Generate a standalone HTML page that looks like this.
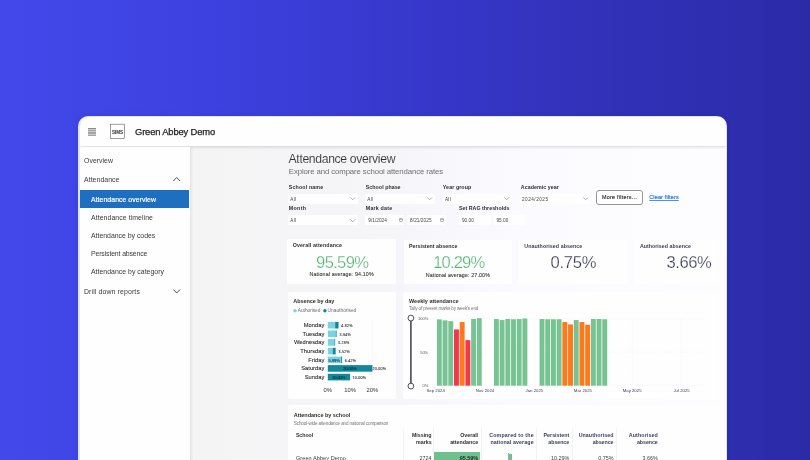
<!DOCTYPE html>
<html><head><meta charset="utf-8"><title>Attendance overview</title>
<style>
html,body{margin:0;padding:0;overflow:hidden;}
html{width:810px;height:460px;}
body{width:810px;height:460px;overflow:hidden;position:relative;font-family:"Liberation Sans", sans-serif;background:linear-gradient(90deg,#4248ea 0%,#3d41df 25%,#383ad0 45%,#3232bc 70%,#2b2ba8 100%);}
.t{position:absolute;white-space:pre;}
.a{position:absolute;}
</style></head><body>
<div class="a" style="left:0;top:0;width:810px;height:460px;overflow:hidden;will-change:transform;opacity:0.999;">
<div class="a" style="left:78px;top:115.5px;width:649px;height:360px;border-radius:10px 10px 0 0;background:#dfe6ff;box-shadow:0 0 6px rgba(20,20,110,0.07);"></div>
<div class="a" style="left:80px;top:117px;width:645.5px;height:350px;border-radius:8.5px 8.5px 0 0;background:#fff;overflow:hidden;">
<div class="a" style="left:109.5px;top:29px;width:536px;height:330px;background:linear-gradient(90deg,#f5f5f5 0%,#f6f6f7 28%,#f8f8fc 48%,#fbfbff 62%,#fdfdff 76%,#fefeff 100%);"></div>
<div class="a" style="left:0;top:0;width:646px;height:29px;background:#fff;box-shadow:0 1px 3px rgba(0,0,30,0.16);"></div>
<div class="a" style="left:0;top:29.5px;width:109.5px;height:330px;background:#fff;box-shadow:1px 0 2px rgba(0,0,0,0.05);border-right:0.8px solid #e6e6e6;"></div>
</div>
<div class="a" style="left:80.2px;top:190.2px;width:109.2px;height:17.7px;background:#1f70c1;"></div>
<div class="a" style="left:88.3px;top:128.0px;width:7.8px;height:8.0px;background:#c9c9c9;"></div>
<div class="a" style="left:88.3px;top:128.0px;width:7.8px;height:0.9px;background:#8c8c8c;"></div>
<div class="a" style="left:88.3px;top:129.75px;width:7.8px;height:0.9px;background:#a6a6a6;"></div>
<div class="a" style="left:88.3px;top:131.5px;width:7.8px;height:0.9px;background:#a6a6a6;"></div>
<div class="a" style="left:88.3px;top:133.25px;width:7.8px;height:0.9px;background:#a6a6a6;"></div>
<div class="a" style="left:88.3px;top:135.0px;width:7.8px;height:0.9px;background:#a6a6a6;"></div>
<svg class="a" style="left:109px;top:123px" width="18" height="18" viewBox="109 123 18 18"><rect x="110.5" y="124.2" width="14" height="14.3" fill="#fff" stroke="#6e6e6e" stroke-width="0.65"/><text x="111.9" y="133.75" font-family="Liberation Sans, sans-serif" font-weight="700" font-size="5.4" textLength="11.3" lengthAdjust="spacingAndGlyphs" fill="#2c2c2c">SIMS</text></svg>
<svg class="a" style="left:173.2px;top:177.4px" width="7.4" height="4.5" viewBox="0 0 7.4 4.5"><path d="M0.3 4 L3.7 0.5 L7.1 4" fill="none" stroke="#333" stroke-width="0.85"/></svg>
<svg class="a" style="left:173.2px;top:289.4px" width="7.4" height="4.5" viewBox="0 0 7.4 4.5"><path d="M0.3 0.5 L3.7 4 L7.1 0.5" fill="none" stroke="#333" stroke-width="0.85"/></svg>
<div class="a" style="left:288px;top:193.5px;width:69.8px;height:10.1px;background:#fff;"></div>
<svg class="a" style="left:350.3px;top:197.2px" width="5.4" height="3.2" viewBox="0 0 5.4 3.2"><path d="M0.2 0.3 L2.7 2.8 L5.2 0.3" fill="none" stroke="#777" stroke-width="0.55"/></svg>
<div class="a" style="left:365px;top:193.5px;width:69.8px;height:10.1px;background:#fff;"></div>
<svg class="a" style="left:427.3px;top:197.2px" width="5.4" height="3.2" viewBox="0 0 5.4 3.2"><path d="M0.2 0.3 L2.7 2.8 L5.2 0.3" fill="none" stroke="#777" stroke-width="0.55"/></svg>
<div class="a" style="left:442.7px;top:193.5px;width:69.2px;height:10.1px;background:#fff;"></div>
<svg class="a" style="left:504.4px;top:197.2px" width="5.4" height="3.2" viewBox="0 0 5.4 3.2"><path d="M0.2 0.3 L2.7 2.8 L5.2 0.3" fill="none" stroke="#777" stroke-width="0.55"/></svg>
<div class="a" style="left:519.8px;top:193.5px;width:70.2px;height:10.1px;background:#fff;"></div>
<svg class="a" style="left:582.5px;top:197.2px" width="5.4" height="3.2" viewBox="0 0 5.4 3.2"><path d="M0.2 0.3 L2.7 2.8 L5.2 0.3" fill="none" stroke="#777" stroke-width="0.55"/></svg>
<div class="a" style="left:288px;top:215px;width:69.8px;height:10.2px;background:#fff;"></div>
<svg class="a" style="left:350.3px;top:218.7px" width="5.4" height="3.2" viewBox="0 0 5.4 3.2"><path d="M0.2 0.3 L2.7 2.8 L5.2 0.3" fill="none" stroke="#777" stroke-width="0.55"/></svg>
<div class="a" style="left:365px;top:215px;width:39px;height:10.2px;background:#fff;"></div>
<div class="a" style="left:407.3px;top:215px;width:38.3px;height:10.2px;background:#fff;"></div>
<div class="a" style="left:458.8px;top:214.9px;width:32px;height:10.2px;background:#fff;"></div>
<div class="a" style="left:493.5px;top:214.9px;width:31.8px;height:10.2px;background:#fff;"></div>
<svg class="a" style="left:399.0px;top:218.1px" width="3.8" height="3.8" viewBox="0 0 3.8 3.8"><rect x="0.35" y="0.45" width="3.1" height="3.0" rx="0.7" fill="none" stroke="#6a6a6a" stroke-width="0.5"/><path d="M0.35 1.35H3.45" stroke="#6a6a6a" stroke-width="0.5"/></svg>
<svg class="a" style="left:440.3px;top:218.1px" width="3.8" height="3.8" viewBox="0 0 3.8 3.8"><rect x="0.35" y="0.45" width="3.1" height="3.0" rx="0.7" fill="none" stroke="#6a6a6a" stroke-width="0.5"/><path d="M0.35 1.35H3.45" stroke="#6a6a6a" stroke-width="0.5"/></svg>
<div class="a" style="left:596px;top:190.2px;width:45.2px;height:13.1px;border:0.6px solid #969696;border-radius:3px;background:#fff;"></div>
<div class="a" style="left:287.4px;top:239px;width:108.7px;height:45px;background:#fff;border-radius:2px;"></div>
<div class="a" style="left:403.9px;top:239.6px;width:108.2px;height:44.2px;background:#fff;border-radius:2px;"></div>
<div class="a" style="left:519.3px;top:240px;width:107.6px;height:44px;background:#fff;border-radius:2px;"></div>
<div class="a" style="left:634px;top:240px;width:85px;height:44px;background:#fff;border-radius:2px;"></div>
<div class="a" style="left:288.1px;top:291.7px;width:108.3px;height:107.6px;background:#fff;border-radius:2px;"></div>
<div class="a" style="left:403.4px;top:291.5px;width:316px;height:107.8px;background:#fff;border-radius:2px;"></div>
<div class="a" style="left:287.6px;top:404.6px;width:432px;height:70px;background:#fff;border-radius:2px;"></div>
<svg class="a" style="left:288px;top:291px" width="110" height="108" viewBox="288 291 110 108">
<circle cx="295" cy="310.7" r="1.75" fill="#79d5e0"/><circle cx="324.9" cy="310.7" r="1.75" fill="#128a9b"/>
<path d="M350.1 320V382" stroke="#ddd" stroke-width="0.4" stroke-dasharray="0.6 1"/>
<path d="M372.4 320V382" stroke="#ddd" stroke-width="0.4" stroke-dasharray="0.6 1"/>
<rect x="327.8" y="321.90" width="7.36" height="6.6" fill="#79d5e0"/>
<rect x="335.16" y="321.90" width="3.39" height="6.6" fill="#128a9b"/>
<rect x="327.8" y="330.50" width="7.92" height="6.6" fill="#79d5e0"/>
<rect x="335.72" y="330.50" width="0.87" height="6.6" fill="#128a9b"/>
<rect x="327.8" y="339.10" width="6.58" height="6.6" fill="#79d5e0"/>
<rect x="334.38" y="339.10" width="0.74" height="6.6" fill="#128a9b"/>
<rect x="327.8" y="347.80" width="4.91" height="6.6" fill="#79d5e0"/>
<rect x="332.71" y="347.80" width="2.94" height="6.6" fill="#128a9b"/>
<rect x="327.8" y="356.60" width="13.36" height="6.6" fill="#79d5e0"/>
<rect x="341.16" y="356.60" width="0.96" height="6.6" fill="#128a9b"/>
<rect x="327.80" y="365.10" width="44.60" height="6.6" fill="#128a9b"/>
<rect x="327.80" y="373.80" width="22.30" height="6.6" fill="#128a9b"/>
</svg>
<svg class="a" style="left:403px;top:291px" width="323" height="108" viewBox="403 291 323 108">
<path d="M430 318.8H706" stroke="#e9e9ef" stroke-width="0.4" stroke-dasharray="0.6 1.2"/>
<path d="M430 352H706" stroke="#e9e9ef" stroke-width="0.4" stroke-dasharray="0.6 1.2"/>
<path d="M430 385.2H706" stroke="#e9e9ef" stroke-width="0.4" stroke-dasharray="0.6 1.2"/>
<path d="M485 318V385.2" stroke="#e9e9ef" stroke-width="0.4" stroke-dasharray="0.6 1.2"/>
<path d="M534.4 318V385.2" stroke="#e9e9ef" stroke-width="0.4" stroke-dasharray="0.6 1.2"/>
<path d="M582.9 318V385.2" stroke="#e9e9ef" stroke-width="0.4" stroke-dasharray="0.6 1.2"/>
<path d="M632.2 318V385.2" stroke="#e9e9ef" stroke-width="0.4" stroke-dasharray="0.6 1.2"/>
<path d="M681.4 318V385.2" stroke="#e9e9ef" stroke-width="0.4" stroke-dasharray="0.6 1.2"/>
<rect x="436.90" y="319.37" width="4.9" height="66.33" fill="#78c494"/>
<rect x="442.60" y="320.38" width="4.9" height="65.33" fill="#78c494"/>
<rect x="448.31" y="321.18" width="4.9" height="64.52" fill="#78c494"/>
<rect x="454.01" y="329.42" width="4.9" height="56.28" fill="#f5384b"/>
<rect x="459.71" y="322.05" width="4.9" height="63.65" fill="#fd7a1c"/>
<rect x="465.41" y="340.14" width="4.9" height="45.56" fill="#f5384b"/>
<rect x="471.12" y="318.97" width="4.9" height="66.73" fill="#78c494"/>
<rect x="476.82" y="318.16" width="4.9" height="67.54" fill="#78c494"/>
<rect x="493.93" y="319.03" width="4.9" height="66.67" fill="#78c494"/>
<rect x="499.63" y="320.04" width="4.9" height="65.66" fill="#78c494"/>
<rect x="505.34" y="319.03" width="4.9" height="66.67" fill="#78c494"/>
<rect x="511.04" y="319.24" width="4.9" height="66.46" fill="#78c494"/>
<rect x="516.74" y="319.03" width="4.9" height="66.67" fill="#78c494"/>
<rect x="522.44" y="318.50" width="4.9" height="67.20" fill="#78c494"/>
<rect x="539.55" y="319.03" width="4.9" height="66.67" fill="#78c494"/>
<rect x="545.26" y="319.24" width="4.9" height="66.46" fill="#78c494"/>
<rect x="550.96" y="319.24" width="4.9" height="66.46" fill="#78c494"/>
<rect x="556.66" y="319.24" width="4.9" height="66.46" fill="#78c494"/>
<rect x="562.37" y="322.05" width="4.9" height="63.65" fill="#fd7a1c"/>
<rect x="568.07" y="324.39" width="4.9" height="61.30" fill="#fd7a1c"/>
<rect x="573.77" y="320.04" width="4.9" height="65.66" fill="#78c494"/>
<rect x="579.48" y="322.05" width="4.9" height="63.65" fill="#fd7a1c"/>
<rect x="585.18" y="324.73" width="4.9" height="60.97" fill="#fd7a1c"/>
<rect x="590.88" y="318.97" width="4.9" height="66.73" fill="#78c494"/>
<rect x="596.58" y="318.97" width="4.9" height="66.73" fill="#78c494"/>
<rect x="602.29" y="319.24" width="4.9" height="66.46" fill="#78c494"/>
<path d="M410.9 318V386.1" stroke="#3c3c50" stroke-width="1.5"/>
<circle cx="410.9" cy="318.1" r="2.9" fill="#fff" stroke="#3c3c50" stroke-width="0.9"/><circle cx="410.9" cy="386.1" r="2.9" fill="#fff" stroke="#3c3c50" stroke-width="0.9"/>
</svg>
<div class="a" style="left:434.2px;top:452.1px;width:45.9px;height:10px;background:#6fc18d;"></div>
<div class="a" style="left:508.2px;top:454.4px;width:3.5px;height:8px;background:#6fc18d;"></div>
<div class="a" style="left:508.0px;top:452.5px;width:0.5px;height:8px;background:#9aa;"></div>
<div class="a" style="left:403.2px;top:428px;width:0.5px;height:34px;background:#f3f3f8;"></div>
<div class="a" style="left:433.4px;top:428px;width:0.5px;height:34px;background:#f3f3f8;"></div>
<div class="a" style="left:481px;top:428px;width:0.5px;height:34px;background:#f3f3f8;"></div>
<div class="a" style="left:535.5px;top:428px;width:0.5px;height:34px;background:#f3f3f8;"></div>
<div class="a" style="left:572px;top:428px;width:0.5px;height:34px;background:#f3f3f8;"></div>
<div class="a" style="left:616.4px;top:428px;width:0.5px;height:34px;background:#f3f3f8;"></div>
<div class="t" style="left:135.00px;top:127.00px;font-size:9.4px;line-height:9.4px;color:#1f1f1f;letter-spacing:-0.146px;-webkit-text-stroke:0.25px #1f1f1f;">Green Abbey Demo</div>
<div class="t" style="left:84.00px;top:158.00px;font-size:6.9px;line-height:6.9px;color:#3a3a3a;letter-spacing:0.035px;">Overview</div>
<div class="t" style="left:84.00px;top:177.00px;font-size:6.9px;line-height:6.9px;color:#3a3a3a;letter-spacing:0.062px;">Attendance</div>
<div class="t" style="left:91.00px;top:197.00px;font-size:6.9px;line-height:6.9px;color:#fff;letter-spacing:0.054px;-webkit-text-stroke:0.2px #fff;">Attendance overview</div>
<div class="t" style="left:91.00px;top:215.00px;font-size:6.9px;line-height:6.9px;color:#3a3a3a;letter-spacing:0.077px;">Attendance timeline</div>
<div class="t" style="left:91.00px;top:233.00px;font-size:6.9px;line-height:6.9px;color:#3a3a3a;letter-spacing:-0.003px;">Attendance by codes</div>
<div class="t" style="left:91.00px;top:251.00px;font-size:6.9px;line-height:6.9px;color:#3a3a3a;letter-spacing:-0.128px;">Persistent absence</div>
<div class="t" style="left:91.00px;top:269.00px;font-size:6.9px;line-height:6.9px;color:#3a3a3a;letter-spacing:0.027px;">Attendance by category</div>
<div class="t" style="left:84.00px;top:289.00px;font-size:6.9px;line-height:6.9px;color:#3a3a3a;letter-spacing:0.132px;">Drill down reports</div>
<div class="t" style="left:288.60px;top:153.00px;font-size:12.2px;line-height:12.2px;color:#303030;letter-spacing:-0.350px;-webkit-text-stroke:0.1px #f5f5f5;">Attendance overview</div>
<div class="t" style="left:288.80px;top:168.00px;font-size:7.8px;line-height:7.8px;color:#707070;letter-spacing:-0.111px;">Explore and compare school attendance rates</div>
<div class="t" style="left:288.80px;top:185.00px;font-size:5.3px;line-height:5.3px;color:#2f2f2f;font-weight:700;letter-spacing:0.139px;">School name</div>
<div class="t" style="left:365.80px;top:185.00px;font-size:5.3px;line-height:5.3px;color:#2f2f2f;font-weight:700;letter-spacing:0.029px;">School phase</div>
<div class="t" style="left:442.80px;top:185.00px;font-size:5.3px;line-height:5.3px;color:#2f2f2f;font-weight:700;letter-spacing:0.083px;">Year group</div>
<div class="t" style="left:520.80px;top:185.00px;font-size:5.3px;line-height:5.3px;color:#2f2f2f;font-weight:700;letter-spacing:0.046px;">Academic year</div>
<div class="t" style="left:288.80px;top:206.00px;font-size:5.3px;line-height:5.3px;color:#2f2f2f;font-weight:700;letter-spacing:0.322px;">Month</div>
<div class="t" style="left:365.80px;top:206.00px;font-size:5.3px;line-height:5.3px;color:#2f2f2f;font-weight:700;letter-spacing:0.196px;">Mark date</div>
<div class="t" style="left:458.90px;top:206.00px;font-size:5.3px;line-height:5.3px;color:#2f2f2f;font-weight:700;letter-spacing:0.025px;">Set RAG thresholds</div>
<div class="t" style="left:290.30px;top:198.00px;font-size:4.6px;line-height:4.6px;color:#444;letter-spacing:0.397px;">All</div>
<div class="t" style="left:367.30px;top:198.00px;font-size:4.6px;line-height:4.6px;color:#444;letter-spacing:0.397px;">All</div>
<div class="t" style="left:444.90px;top:198.00px;font-size:4.6px;line-height:4.6px;color:#444;letter-spacing:0.397px;">All</div>
<div class="t" style="left:522.00px;top:198.00px;font-size:4.6px;line-height:4.6px;color:#444;letter-spacing:0.531px;">2024/2025</div>
<div class="t" style="left:290.30px;top:219.00px;font-size:4.6px;line-height:4.6px;color:#444;letter-spacing:0.397px;">All</div>
<div class="t" style="left:368.30px;top:219.00px;font-size:4.7px;line-height:4.7px;color:#444;letter-spacing:0.031px;">9/1/2024</div>
<div class="t" style="left:410.10px;top:219.00px;font-size:4.7px;line-height:4.7px;color:#444;letter-spacing:0.071px;">8/21/2025</div>
<div class="t" style="left:461.90px;top:219.00px;font-size:4.7px;line-height:4.7px;color:#444;letter-spacing:0.053px;">90.00</div>
<div class="t" style="left:496.40px;top:219.00px;font-size:4.7px;line-height:4.7px;color:#444;letter-spacing:0.053px;">95.00</div>
<div class="t" style="left:602.00px;top:195.00px;font-size:5.4px;line-height:5.4px;color:#333;letter-spacing:0.256px;-webkit-text-stroke:0.15px #333;">More filters...</div>
<div class="t" style="left:649.30px;top:195.00px;font-size:5.4px;line-height:5.4px;color:#2078e6;letter-spacing:0.172px;-webkit-text-stroke:0.18px #2078e6;text-decoration:underline;text-decoration-thickness:0.45px;text-underline-offset:1px;text-decoration-color:rgba(32,120,230,0.8);">Clear filters</div>
<div class="t" style="left:292.70px;top:243.00px;font-size:5.3px;line-height:5.3px;color:#2f2f2f;font-weight:700;letter-spacing:0.116px;">Overall attendance</div>
<div class="t" style="left:316.10px;top:255.00px;font-size:16.6px;line-height:16.6px;color:#55b674;letter-spacing:-0.680px;-webkit-text-stroke:0.25px #fff;">95.59%</div>
<div class="t" style="left:309.50px;top:272.00px;font-size:5.3px;line-height:5.3px;color:#333;letter-spacing:0.139px;-webkit-text-stroke:0.08px #333;">National average: 94.10%</div>
<div class="t" style="left:408.90px;top:244.00px;font-size:5.3px;line-height:5.3px;color:#2f2f2f;font-weight:700;letter-spacing:0.011px;">Persistent absence</div>
<div class="t" style="left:433.20px;top:255.00px;font-size:16.6px;line-height:16.6px;color:#55b674;letter-spacing:-0.847px;-webkit-text-stroke:0.25px #fff;">10.29%</div>
<div class="t" style="left:425.80px;top:273.00px;font-size:5.3px;line-height:5.3px;color:#333;letter-spacing:0.135px;-webkit-text-stroke:0.08px #333;">National average: 27.00%</div>
<div class="t" style="left:524.30px;top:244.00px;font-size:5.3px;line-height:5.3px;color:#3d3d5e;font-weight:700;letter-spacing:0.059px;">Unauthorised absence</div>
<div class="t" style="left:550.40px;top:255.00px;font-size:16.6px;line-height:16.6px;color:#36364f;letter-spacing:-0.233px;-webkit-text-stroke:0.25px #fff;">0.75%</div>
<div class="t" style="left:639.90px;top:244.00px;font-size:5.3px;line-height:5.3px;color:#3d3d5e;font-weight:700;letter-spacing:0.020px;">Authorised absence</div>
<div class="t" style="left:666.50px;top:255.00px;font-size:16.6px;line-height:16.6px;color:#36364f;letter-spacing:-0.453px;-webkit-text-stroke:0.25px #fff;">3.66%</div>
<div class="t" style="left:293.30px;top:299.00px;font-size:5.5px;line-height:5.5px;color:#2f2f2f;font-weight:700;letter-spacing:-0.064px;">Absence by day</div>
<div class="t" style="left:297.80px;top:309.00px;font-size:4.8px;line-height:4.8px;color:#6f6f6f;letter-spacing:-0.034px;">Authorised</div>
<div class="t" style="left:327.60px;top:309.00px;font-size:4.8px;line-height:4.8px;color:#6f6f6f;letter-spacing:0.013px;">Unauthorised</div>
<div class="t" style="left:303.83px;top:323.00px;font-size:5.75px;line-height:5.75px;color:#2e2e2e;-webkit-text-stroke:0.1px #2e2e2e;">Monday</div>
<div class="t" style="left:302.46px;top:332.00px;font-size:5.75px;line-height:5.75px;color:#2e2e2e;-webkit-text-stroke:0.1px #2e2e2e;">Tuesday</div>
<div class="t" style="left:294.03px;top:340.00px;font-size:5.75px;line-height:5.75px;color:#2e2e2e;-webkit-text-stroke:0.1px #2e2e2e;">Wednesday</div>
<div class="t" style="left:300.33px;top:349.00px;font-size:5.75px;line-height:5.75px;color:#2e2e2e;-webkit-text-stroke:0.1px #2e2e2e;">Thursday</div>
<div class="t" style="left:308.32px;top:358.00px;font-size:5.75px;line-height:5.75px;color:#2e2e2e;-webkit-text-stroke:0.1px #2e2e2e;">Friday</div>
<div class="t" style="left:301.28px;top:366.00px;font-size:5.75px;line-height:5.75px;color:#2e2e2e;-webkit-text-stroke:0.1px #2e2e2e;">Saturday</div>
<div class="t" style="left:304.78px;top:375.00px;font-size:5.75px;line-height:5.75px;color:#2e2e2e;-webkit-text-stroke:0.1px #2e2e2e;">Sunday</div>
<div class="t" style="left:341.30px;top:325.00px;font-size:3.6px;line-height:3.6px;color:#333;letter-spacing:0.259px;-webkit-text-stroke:0.1px #333;">4.82%</div>
<div class="t" style="left:339.40px;top:334.00px;font-size:3.6px;line-height:3.6px;color:#333;letter-spacing:0.259px;-webkit-text-stroke:0.1px #333;">3.94%</div>
<div class="t" style="left:338.00px;top:342.00px;font-size:3.6px;line-height:3.6px;color:#333;letter-spacing:0.259px;-webkit-text-stroke:0.1px #333;">3.28%</div>
<div class="t" style="left:338.50px;top:351.00px;font-size:3.6px;line-height:3.6px;color:#333;letter-spacing:0.259px;-webkit-text-stroke:0.1px #333;">3.52%</div>
<div class="t" style="left:344.80px;top:360.00px;font-size:3.6px;line-height:3.6px;color:#333;letter-spacing:0.259px;-webkit-text-stroke:0.1px #333;">6.42%</div>
<div class="t" style="left:372.60px;top:368.00px;font-size:3.6px;line-height:3.6px;color:#333;letter-spacing:0.233px;-webkit-text-stroke:0.1px #333;">20.00%</div>
<div class="t" style="left:352.60px;top:377.00px;font-size:3.6px;line-height:3.6px;color:#333;letter-spacing:0.233px;-webkit-text-stroke:0.1px #333;">10.00%</div>
<div class="t" style="left:328.40px;top:359.00px;font-size:4.1px;line-height:4.1px;color:#123b43;letter-spacing:-0.022px;-webkit-text-stroke:0.1px #123b43;">5.99%</div>
<div class="t" style="left:343.00px;top:367.00px;font-size:4.1px;line-height:4.1px;color:#082a31;letter-spacing:-0.032px;-webkit-text-stroke:0.08px #082a31;">20.00%</div>
<div class="t" style="left:332.20px;top:376.00px;font-size:4.1px;line-height:4.1px;color:#082a31;letter-spacing:-0.148px;-webkit-text-stroke:0.08px #082a31;">10.00%</div>
<div class="t" style="left:323.60px;top:388.00px;font-size:5.8px;line-height:5.8px;color:#333;">0%</div>
<div class="t" style="left:344.30px;top:388.00px;font-size:5.8px;line-height:5.8px;color:#333;">10%</div>
<div class="t" style="left:366.60px;top:388.00px;font-size:5.8px;line-height:5.8px;color:#333;">20%</div>
<div class="t" style="left:409.00px;top:299.00px;font-size:5.5px;line-height:5.5px;color:#2f2f2f;font-weight:700;letter-spacing:0.005px;">Weekly attendance</div>
<div class="t" style="left:409.00px;top:307.00px;font-size:4.6px;line-height:4.6px;color:#777;letter-spacing:-0.159px;">Tally of present marks by week&#x27;s end</div>
<div class="t" style="left:417.97px;top:317.00px;font-size:4.0px;line-height:4.0px;color:#555;">100%</div>
<div class="t" style="left:420.18px;top:351.00px;font-size:4.0px;line-height:4.0px;color:#555;">50%</div>
<div class="t" style="left:422.42px;top:384.00px;font-size:4.0px;line-height:4.0px;color:#555;">0%</div>
<div class="t" style="left:426.50px;top:389.00px;font-size:4.3px;line-height:4.3px;color:#3d3d5e;">Sep 2024</div>
<div class="t" style="left:475.80px;top:389.00px;font-size:4.3px;line-height:4.3px;color:#3d3d5e;">Nov 2024</div>
<div class="t" style="left:525.56px;top:389.00px;font-size:4.3px;line-height:4.3px;color:#3d3d5e;">Jan 2025</div>
<div class="t" style="left:573.82px;top:389.00px;font-size:4.3px;line-height:4.3px;color:#3d3d5e;">Mar 2025</div>
<div class="t" style="left:622.66px;top:389.00px;font-size:4.3px;line-height:4.3px;color:#3d3d5e;">May 2025</div>
<div class="t" style="left:673.48px;top:389.00px;font-size:4.3px;line-height:4.3px;color:#3d3d5e;">Jul 2025</div>
<div class="t" style="left:293.80px;top:413.00px;font-size:5.5px;line-height:5.5px;color:#2f2f2f;font-weight:700;letter-spacing:-0.033px;">Attendance by school</div>
<div class="t" style="left:293.80px;top:422.00px;font-size:4.6px;line-height:4.6px;color:#777;letter-spacing:-0.128px;">School-wide attendance and national comparison</div>
<div class="t" style="left:295.90px;top:433.00px;font-size:5.3px;line-height:5.3px;color:#2f2f2f;font-weight:700;letter-spacing:-0.062px;">School</div>
<div class="t" style="left:411.88px;top:433.00px;font-size:5.3px;line-height:5.3px;color:#2f2f2f;font-weight:700;">Missing</div>
<div class="t" style="left:415.99px;top:440.00px;font-size:5.3px;line-height:5.3px;color:#2f2f2f;font-weight:700;">marks</div>
<div class="t" style="left:460.13px;top:433.00px;font-size:5.3px;line-height:5.3px;color:#2f2f2f;font-weight:700;">Overall</div>
<div class="t" style="left:450.13px;top:440.00px;font-size:5.3px;line-height:5.3px;color:#2f2f2f;font-weight:700;">attendance</div>
<div class="t" style="left:489.17px;top:433.00px;font-size:5.3px;line-height:5.3px;color:#3d3d5e;font-weight:700;letter-spacing:0.167px;">Compared to the</div>
<div class="t" style="left:490.39px;top:440.00px;font-size:5.3px;line-height:5.3px;color:#3d3d5e;font-weight:700;letter-spacing:0.093px;">national average</div>
<div class="t" style="left:543.60px;top:433.00px;font-size:5.3px;line-height:5.3px;color:#3d3d5e;font-weight:700;letter-spacing:-0.002px;">Persistent</div>
<div class="t" style="left:548.34px;top:440.00px;font-size:5.3px;line-height:5.3px;color:#3d3d5e;font-weight:700;letter-spacing:-0.058px;">absence</div>
<div class="t" style="left:578.66px;top:433.00px;font-size:5.3px;line-height:5.3px;color:#3d3d5e;font-weight:700;letter-spacing:0.063px;">Unauthorised</div>
<div class="t" style="left:592.64px;top:440.00px;font-size:5.3px;line-height:5.3px;color:#3d3d5e;font-weight:700;letter-spacing:-0.058px;">absence</div>
<div class="t" style="left:628.72px;top:433.00px;font-size:5.3px;line-height:5.3px;color:#3d3d5e;font-weight:700;letter-spacing:0.123px;">Authorised</div>
<div class="t" style="left:636.94px;top:440.00px;font-size:5.3px;line-height:5.3px;color:#3d3d5e;font-weight:700;letter-spacing:-0.058px;">absence</div>
<div class="t" style="left:295.90px;top:456.00px;font-size:5.6px;line-height:5.6px;color:#444;letter-spacing:0.054px;">Green Abbey Demo</div>
<div class="t" style="left:419.60px;top:456.00px;font-size:5.4px;line-height:5.4px;color:#444;">2724</div>
<div class="t" style="left:459.80px;top:456.00px;font-size:5.4px;line-height:5.4px;color:#1c2a22;font-weight:700;">95.59%</div>
<div class="t" style="left:550.90px;top:456.00px;font-size:5.4px;line-height:5.4px;color:#444;">10.29%</div>
<div class="t" style="left:598.20px;top:456.00px;font-size:5.4px;line-height:5.4px;color:#444;">0.75%</div>
<div class="t" style="left:642.50px;top:456.00px;font-size:5.4px;line-height:5.4px;color:#444;">3.66%</div>
</div>
</body></html>
